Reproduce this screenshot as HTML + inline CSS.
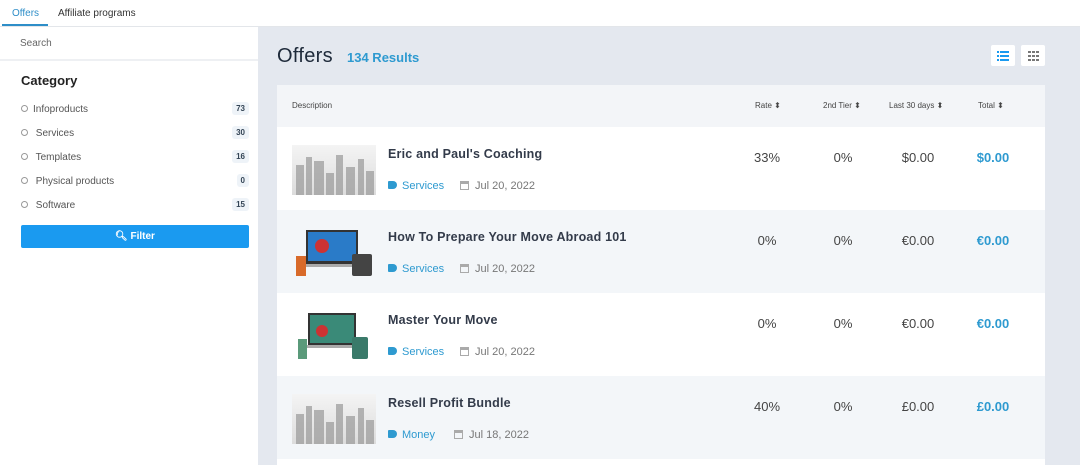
<!DOCTYPE html>
<html><head><style>
*{margin:0;padding:0;box-sizing:border-box}
body{width:1080px;height:465px;overflow:hidden;font-family:"Liberation Sans",sans-serif;background:#e4e8ef;position:relative;color:#333}
.top{position:absolute;left:0;top:0;width:1080px;height:27px;background:#fff;border-bottom:1px solid #e3e6ea}
.tab{position:absolute;top:8px;font-size:10px;color:#333}
.side{position:absolute;left:0;top:27px;width:258px;height:438px;background:#fff}
.search{height:34px;border-bottom:2px solid #eef0f3;padding:11px 20px;font-size:10px;color:#666}
.cat{position:absolute;left:21px;top:46px;font-size:13px;font-weight:bold;color:#222}
.ci{position:absolute;left:21px;width:228px;font-size:10px;color:#555}
.ci i{display:inline-block;width:7px;height:7px;border:1px solid #999;border-radius:50%;margin-right:5px;vertical-align:-0px}
.ci b{position:absolute;right:0;top:-2px;background:#eef3f8;color:#345;font-size:8px;padding:2px 4px;border-radius:3px}
.btn{position:absolute;left:21px;top:198px;width:228px;height:23px;background:#1a9af0;border-radius:2px;color:#fff;font-size:10px;font-weight:bold;text-align:center;line-height:23px}
h1{position:absolute;left:277px;top:45px;font-size:20px;font-weight:normal;color:#1e2a3a;letter-spacing:.3px}
.res{position:absolute;left:347px;top:50px;font-size:13px;font-weight:bold;color:#2e9ad0}
.vb{position:absolute;top:45px;width:24px;height:21px;background:#fff;border-radius:2px}
.card{position:absolute;left:277px;top:85px;width:768px;height:380px;background:#fff}
.hd{height:42px;background:#f3f5f8;position:relative;font-size:8px;color:#444}
.hd span{position:absolute;top:16px}
.row{position:absolute;left:0;width:768px;height:83px}
.alt{background:#f3f6f9}
.th{position:absolute;left:15px;top:18px;width:84px;height:50px}
.tt{position:absolute;left:111px;top:20px;font-size:12.5px;font-weight:bold;color:#333b4a;letter-spacing:.2px}
.tg{position:absolute;left:111px;top:53px;font-size:11px;color:#2e9ad0}
.dt{position:absolute;left:183px;top:53px;font-size:11px;color:#777}
.v{position:absolute;top:23px;font-size:13px;color:#444;text-align:center;width:80px}
.tot{color:#2e9ad0;font-weight:bold}
.tag{display:inline-block;width:9px;height:8px;background:#2e9ad0;border-radius:1px 4px 4px 1px;margin-right:5px}
.cal{display:inline-block;width:9px;height:9px;border:1.5px solid #aaa;border-top-width:3px;margin-right:6px;vertical-align:-1px}
.city{background:linear-gradient(#f4f4f4,#dcdcdc);overflow:hidden}
</style></head><body>
<div class="top"><div class="tab" style="left:12px;color:#2e8ec8">Offers</div><div style="position:absolute;left:2px;top:24px;width:46px;height:2px;background:#2e8ec8"></div><div class="tab" style="left:58px">Affiliate programs</div></div>
<div class="side"><div class="search">Search</div>
<div class="cat">Category</div>
<div class="ci" style="top:77px"><i></i>Infoproducts<b>73</b></div>
<div class="ci" style="top:101px"><i></i> Services<b>30</b></div>
<div class="ci" style="top:125px"><i></i> Templates<b>16</b></div>
<div class="ci" style="top:149px"><i></i> Physical products<b>0</b></div>
<div class="ci" style="top:173px"><i></i> Software<b>15</b></div>
<div class="btn">&#x1F50D;&#xFE0E; Filter</div></div>
<h1>Offers</h1><div class="res">134 Results</div>
<div class="vb" style="left:991px"><svg width="24" height="21"><g fill="#1a9af0"><rect x="6" y="6" width="2" height="2"/><rect x="9" y="6" width="9" height="2"/><rect x="6" y="10" width="2" height="2"/><rect x="9" y="10" width="9" height="2"/><rect x="6" y="14" width="2" height="2"/><rect x="9" y="14" width="9" height="2"/></g></svg></div>
<div class="vb" style="left:1021px"><svg width="24" height="21"><g fill="#777"><rect x="7" y="6" width="3" height="2"/><rect x="11" y="6" width="3" height="2"/><rect x="15" y="6" width="3" height="2"/><rect x="7" y="10" width="3" height="2"/><rect x="11" y="10" width="3" height="2"/><rect x="15" y="10" width="3" height="2"/><rect x="7" y="14" width="3" height="2"/><rect x="11" y="14" width="3" height="2"/><rect x="15" y="14" width="3" height="2"/></g></svg></div>
<div class="card">
<div class="hd"><span style="left:15px">Description</span><span style="left:478px">Rate ⬍</span><span style="left:546px">2nd Tier ⬍</span><span style="left:612px">Last 30 days ⬍</span><span style="left:701px">Total ⬍</span></div>

<div class="row" style="top:42px">
<div class="th city"><svg width="84" height="50"><g fill="#999" opacity=".7"><rect x="4" y="20" width="8" height="30"/><rect x="14" y="12" width="6" height="38"/><rect x="22" y="16" width="10" height="34"/><rect x="34" y="28" width="8" height="22"/><rect x="44" y="10" width="7" height="40"/><rect x="54" y="22" width="9" height="28"/><rect x="66" y="14" width="6" height="36"/><rect x="74" y="26" width="8" height="24"/></g></svg></div>
<div class="tt">Eric and Paul's Coaching</div><div class="tg"><span class="tag"></span>Services</div><div class="dt"><span class="cal"></span>Jul 20, 2022</div>
<div class="v" style="left:450px">33%</div><div class="v" style="left:526px">0%</div><div class="v" style="left:601px">$0.00</div><div class="v tot" style="left:676px">$0.00</div></div>

<div class="row alt" style="top:125px">
<div class="th"><svg width="84" height="50"><rect x="14" y="2" width="52" height="34" fill="#333"/><rect x="16" y="4" width="48" height="29" fill="#2a7bc8"/><circle cx="30" cy="18" r="7" fill="#c33"/><rect x="8" y="36" width="64" height="3" fill="#aaa"/><rect x="4" y="28" width="10" height="20" fill="#d86a2a"/><rect x="60" y="26" width="20" height="22" rx="2" fill="#444"/></svg></div>
<div class="tt">How To Prepare Your Move Abroad 101</div><div class="tg"><span class="tag"></span>Services</div><div class="dt"><span class="cal"></span>Jul 20, 2022</div>
<div class="v" style="left:450px">0%</div><div class="v" style="left:526px">0%</div><div class="v" style="left:601px">€0.00</div><div class="v tot" style="left:676px">€0.00</div></div>

<div class="row" style="top:208px">
<div class="th"><svg width="84" height="50"><rect x="16" y="2" width="48" height="32" fill="#333"/><rect x="18" y="4" width="44" height="28" fill="#3a8a78"/><circle cx="30" cy="20" r="6" fill="#c33"/><rect x="10" y="34" width="60" height="3" fill="#aaa"/><rect x="6" y="28" width="9" height="20" fill="#5a9a7a"/><rect x="60" y="26" width="16" height="22" rx="2" fill="#3a7a6a"/></svg></div>
<div class="tt">Master Your Move</div><div class="tg"><span class="tag"></span>Services</div><div class="dt"><span class="cal"></span>Jul 20, 2022</div>
<div class="v" style="left:450px">0%</div><div class="v" style="left:526px">0%</div><div class="v" style="left:601px">€0.00</div><div class="v tot" style="left:676px">€0.00</div></div>

<div class="row alt" style="top:291px">
<div class="th city"><svg width="84" height="50"><g fill="#999" opacity=".7"><rect x="4" y="20" width="8" height="30"/><rect x="14" y="12" width="6" height="38"/><rect x="22" y="16" width="10" height="34"/><rect x="34" y="28" width="8" height="22"/><rect x="44" y="10" width="7" height="40"/><rect x="54" y="22" width="9" height="28"/><rect x="66" y="14" width="6" height="36"/><rect x="74" y="26" width="8" height="24"/></g></svg></div>
<div class="tt">Resell Profit Bundle</div><div class="tg"><span class="tag"></span>Money</div><div class="dt" style="left:177px"><span class="cal"></span>Jul 18, 2022</div>
<div class="v" style="left:450px">40%</div><div class="v" style="left:526px">0%</div><div class="v" style="left:601px">£0.00</div><div class="v tot" style="left:676px">£0.00</div></div>
</div>
</body></html>
